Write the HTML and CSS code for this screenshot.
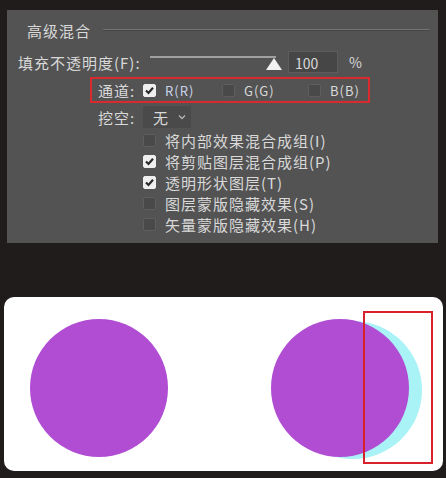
FILE: index.html
```html
<html lang="zh">

<head>
    <title>高级混合</title>
    <link rel="stylesheet" href="styles.css">
</head>

<body>
    <div class="panel">
        <div class="legend">
            <span class="legend-title">高级混合</span>
            <span class="legend-line"></span>
        </div>

        <div class="fill-row">
            <span class="fill-label">填充不透明度(F):</span>
            <div class="slider">
                <div class="track"></div>
                <svg class="thumb" width="16" height="12" viewBox="0 0 16 12">
                    <polygon points="8,0 16,12 0,12" fill="#f2f2f2" />
                </svg>
            </div>
            <div class="num-box">100</div>
            <span class="unit">%</span>
        </div>

        <div class="channel-row">
            <span class="row-label">通道:</span>
            <div class="option opt-r">
                <span class="box checked">
                    <svg width="13" height="13" viewBox="0 0 13 13"><polyline points="3,6.5 5.5,9 10,3.8" fill="none" stroke="#2a2a2a" stroke-width="2.2" /></svg>
                </span>
                <span class="opt-text">R(R)</span>
            </div>
            <div class="option opt-g">
                <span class="box"></span>
                <span class="opt-text">G(G)</span>
            </div>
            <div class="option">
                <span class="box"></span>
                <span class="opt-text">B(B)</span>
            </div>
        </div>

        <div class="knock-row">
            <span class="row-label">挖空:</span>
            <div class="select">
                <span>无</span>
                <svg width="8" height="6" viewBox="0 0 8 6"><polyline points="1,1.5 4,4.5 7,1.5" fill="none" stroke="#b5b5b5" stroke-width="1.3" /></svg>
            </div>
        </div>

        <div class="check-list">
            <div class="check-item">
                <span class="box"></span>
                <span>将内部效果混合成组(I)</span>
            </div>
            <div class="check-item">
                <span class="box checked">
                    <svg width="13" height="13" viewBox="0 0 13 13"><polyline points="3,6.5 5.5,9 10,3.8" fill="none" stroke="#2a2a2a" stroke-width="2.2" /></svg>
                </span>
                <span>将剪贴图层混合成组(P)</span>
            </div>
            <div class="check-item">
                <span class="box checked">
                    <svg width="13" height="13" viewBox="0 0 13 13"><polyline points="3,6.5 5.5,9 10,3.8" fill="none" stroke="#2a2a2a" stroke-width="2.2" /></svg>
                </span>
                <span>透明形状图层(T)</span>
            </div>
            <div class="check-item">
                <span class="box"></span>
                <span>图层蒙版隐藏效果(S)</span>
            </div>
            <div class="check-item">
                <span class="box"></span>
                <span>矢量蒙版隐藏效果(H)</span>
            </div>
        </div>
    </div>

    <div class="card">
        <svg class="preview" width="439" height="174" viewBox="0 0 439 174">
            <circle cx="95" cy="91" r="69" fill="#b04dd3" />
            <circle cx="349" cy="93" r="69" fill="#a9f3f7" />
            <circle cx="336" cy="91" r="69" fill="#b04dd3" />
            <rect x="360" y="15" width="68" height="151" fill="none" stroke="#d8222b" stroke-width="2" />
        </svg>
    </div>
</body>
</html>
```

FILE: styles.css
```css
body {
    margin: 0;
    padding: 0;
    width: 446px;
    height: 478px;
    background-color: #201c1b;
    overflow: hidden;
    font-family: "Noto Sans CJK SC", "Noto Sans", sans-serif;
    font-size: 15px;
    letter-spacing: 1px;
    color: #d9d9d9;
}

.panel {
    margin: 10px 0 0 7px;
    width: 431px;
    height: 233px;
    background-color: #535353;
    display: flex;
    flex-direction: column;
}

.legend {
    margin-top: 10px;
    height: 22px;
    display: flex;
    align-items: center;
    padding-left: 20px;
}

.legend-title {
    line-height: 22px;
}

.legend-line {
    flex: 1;
    margin: 0 8px 2px 12px;
    border-top: 1px solid #727272;
    border-bottom: 1px solid #474747;
}

.fill-row {
    margin-top: 8px;
    height: 24px;
    display: flex;
    align-items: center;
    padding-left: 11px;
}

.fill-label {
    width: 132px;
    white-space: nowrap;
}

.slider {
    position: relative;
    width: 126px;
    height: 24px;
}

.track {
    margin-top: 6px;
    height: 2px;
    background-color: #a0a0a0;
}

.thumb {
    position: absolute;
    right: -6px;
    top: 8px;
}

.num-box {
    margin-left: 12px;
    width: 50px;
    height: 22px;
    padding-left: 6px;
    line-height: 22px;
    font-size: 14px;
    letter-spacing: 0;
    background-color: #464646;
    border: 1px solid #5d5d5d;
    box-sizing: border-box;
}

.unit {
    margin-left: 11px;
    font-size: 14px;
}

.channel-row {
    margin: 3px 0 0 83px;
    width: 280px;
    height: 26px;
    box-sizing: border-box;
    border: 2px solid #d92a30;
    display: flex;
    align-items: center;
    padding-left: 6px;
}

.row-label {
    width: 45px;
    white-space: nowrap;
}

.option {
    display: flex;
    align-items: center;
    gap: 9px;
    font-size: 13px;
}

.opt-r {
    width: 79px;
}

.opt-r .opt-text {
    color: #c9d3ea;
}

.opt-g {
    width: 86px;
}

.box {
    width: 13px;
    height: 13px;
    box-sizing: border-box;
    border-radius: 2px;
    background-color: #494949;
    border: 1px solid #5e5e5e;
    display: inline-flex;
    flex-shrink: 0;
}

.box.checked {
    background-color: #efefef;
    border-color: #efefef;
}

.box.checked svg {
    margin: -1px;
}

.knock-row {
    margin: 3px 0 0 91px;
    height: 22px;
    display: flex;
    align-items: center;
}

.select {
    width: 48px;
    height: 22px;
    box-sizing: border-box;
    background-color: #4a4a4a;
    display: flex;
    align-items: center;
    justify-content: space-between;
    padding: 0 5px 0 10px;
}

.check-list {
    margin: 2px 0 0 136px;
    display: flex;
    flex-direction: column;
}

.check-item {
    height: 21px;
    display: flex;
    align-items: center;
    gap: 9px;
    white-space: nowrap;
}

.card {
    margin: 54px 0 0 4px;
    width: 439px;
    height: 174px;
    background-color: #ffffff;
    border-radius: 10px;
    overflow: hidden;
}

.preview {
    display: block;
}
```
